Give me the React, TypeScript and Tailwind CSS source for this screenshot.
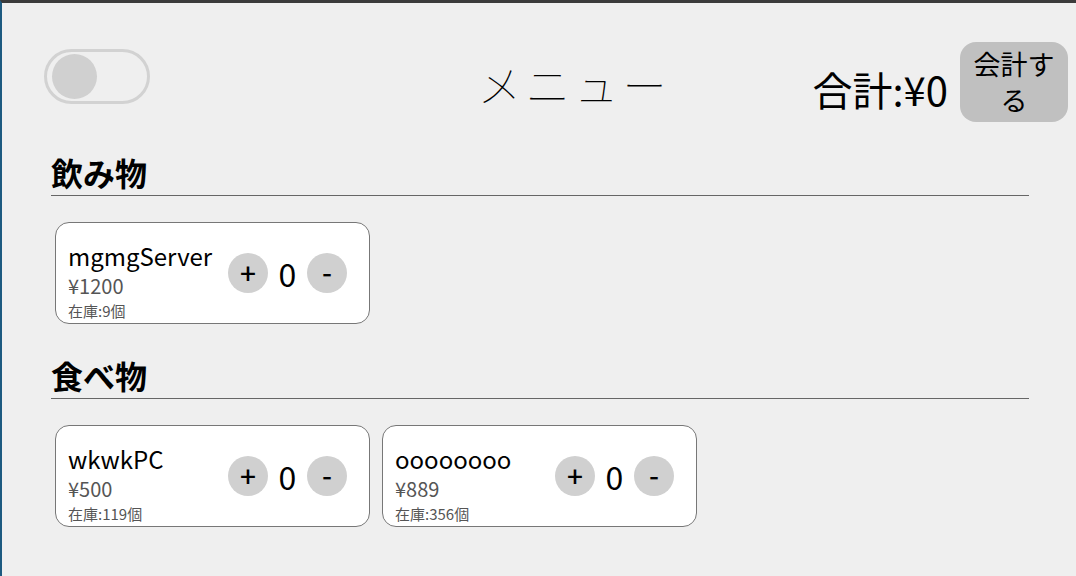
import { useState } from 'react'

interface Item {
  id: string
  name: string
  price: number
  stock: number
}

const sections: { title: string; items: Item[] }[] = [
  { title: '飲み物', items: [{ id: 'a', name: 'mgmgServer', price: 1200, stock: 9 }] },
  {
    title: '食べ物',
    items: [
      { id: 'b', name: 'wkwkPC', price: 500, stock: 119 },
      { id: 'c', name: 'oooooooo', price: 889, stock: 356 },
    ],
  },
]

function ItemCard({ item, count, onAdd, onSub }: { item: Item; count: number; onAdd: () => void; onSub: () => void }) {
  return (
    <div className="w-[315px] h-[102px] bg-white border border-[#777] rounded-[14px] pl-[12px] pr-[22px] flex items-start overflow-hidden">
      <div className="w-[160px] pt-[17px] shrink-0">
        <div className="text-[24px] leading-[32px] text-black">{item.name}</div>
        <div className="text-[20px] leading-[28px] text-[#555]">¥{item.price}</div>
        <div className="text-[15px] leading-[22px] text-[#555]">在庫:{item.stock}個</div>
      </div>
      <div className="flex items-center self-center">
        <button onClick={onAdd} className="w-[40px] h-[40px] rounded-full bg-[#d0d0d0] text-[28px] font-medium leading-none flex items-center justify-center text-black pb-[3px]">+</button>
        <span className="w-[39px] text-center text-[32px] leading-none text-black">{count}</span>
        <button onClick={onSub} className="w-[40px] h-[40px] rounded-full bg-[#d0d0d0] text-[28px] font-medium leading-none flex items-center justify-center text-black pb-[5px]">-</button>
      </div>
    </div>
  )
}

export default function App() {
  const [counts, setCounts] = useState<Record<string, number>>({})
  const [on, setOn] = useState(false)

  const all = sections.flatMap(s => s.items)
  const total = all.reduce((sum, i) => sum + (counts[i.id] || 0) * i.price, 0)

  const change = (id: string, d: number) =>
    setCounts(c => ({ ...c, [id]: Math.max(0, (c[id] || 0) + d) }))

  return (
    <div
      className="w-[1076px] h-[576px] bg-[#efefef] border-t-[3px] border-t-[#3b3b3b] border-l-[2px] border-l-[#1d5a80] overflow-hidden"
      style={{ fontFamily: '"Noto Sans CJK JP", "Noto Sans", sans-serif' }}
    >
      {/* header */}
      <div className="flex items-start pl-[42px] pr-[8px] pt-[39px]">
        <button
          onClick={() => setOn(!on)}
          className="mt-[7px] w-[106px] h-[55px] rounded-full border-[3px] border-[#d2d2d2] flex items-center px-[5px]"
        >
          <span className="w-[45px] h-[45px] rounded-full bg-[#d0d0d0]" />
        </button>
        <h1 className="flex-1 mt-[12px] text-center text-[44px] font-thin tracking-[0.1em] text-black pl-[186px] leading-[60px]">メニュー</h1>
        <div className="mt-[23px] text-[40px] leading-[48px] text-black mr-[12px]">合計:¥{total}</div>
        <button className="w-[108px] h-[80px] rounded-[16px] bg-[#c0c0c0] text-[27px] leading-[36px] text-black px-[12px]">会計する</button>
      </div>

      {/* sections */}
      <div className="pl-[49px] pr-[47px] mt-[28px]">
        {sections.map(s => (
          <div key={s.title} className="mb-[29px]">
            <h2 className="text-[32px] font-bold leading-[44px] text-black border-b border-[#666] pb-[1px]">{s.title}</h2>
            <div className="flex gap-[12px] mt-[26px] pl-[4px]">
              {s.items.map(i => (
                <ItemCard
                  key={i.id}
                  item={i}
                  count={counts[i.id] || 0}
                  onAdd={() => change(i.id, 1)}
                  onSub={() => change(i.id, -1)}
                />
              ))}
            </div>
          </div>
        ))}
      </div>
    </div>
  )
}
